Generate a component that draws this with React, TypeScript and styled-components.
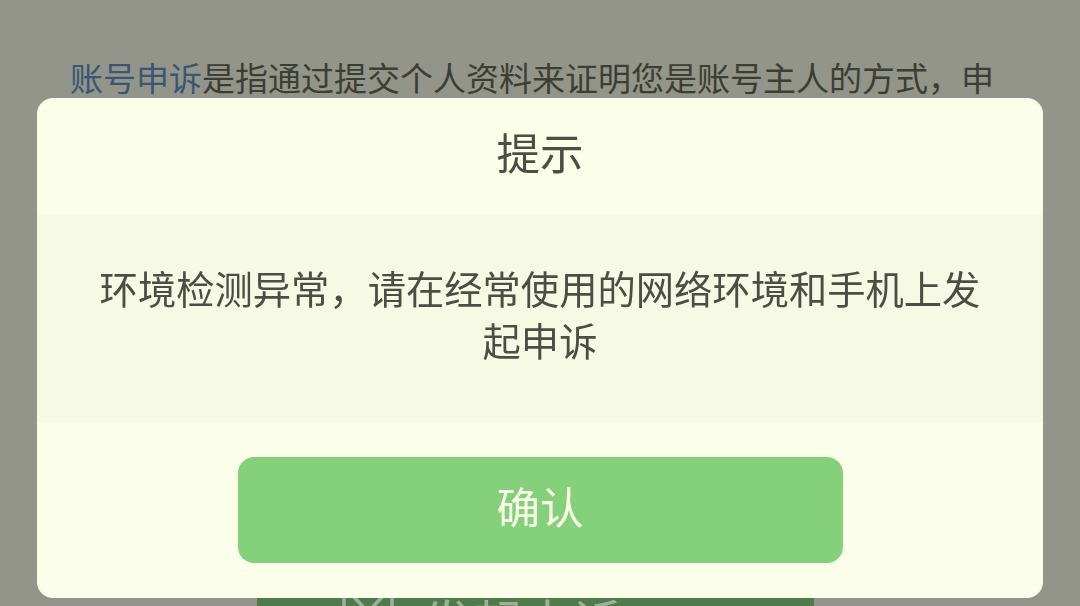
import { createGlobalStyle, styled } from "styled-components";

const Global = createGlobalStyle`
  html, body {
    margin: 0;
    padding: 0;
    height: 606px;
    overflow: hidden;
    background: #93958a;
    font-family: "Roboto", "Noto Sans CJK SC", sans-serif;
  }
`;

const Page = styled.div`
  width: 1080px;
  height: 606px;
  overflow: hidden;
  display: flex;
  flex-direction: column;
  align-items: center;
  background: #93958a;
`;

const Intro = styled.p`
  margin: 0;
  width: 940px;
  padding-top: 56px;
  height: 542px;
  flex: none;
  box-sizing: border-box;
  font-size: 33px;
  line-height: 48px;
  color: #3c3e34;
  a {
    color: #3b5675;
    text-decoration: none;
  }
`;

const SubmitBar = styled.div`
  flex: none;
  width: 557px;
  height: 100px;
  margin-right: 10px;
  display: flex;
  align-items: flex-start;
  gap: 27px;
  padding: 48px 0 0 83px;
  box-sizing: border-box;
  background: #4f7b4c;
  color: #9db09a;
  font-size: 50px;
  line-height: 71px;
  white-space: nowrap;
`;

const Overlay = styled.div`
  position: fixed;
  inset: 0;
  display: flex;
  justify-content: center;
  align-items: flex-start;
  padding-top: 98px;
`;

const Dialog = styled.div`
  width: 1006px;
  height: 500px;
  border-radius: 16px;
  overflow: hidden;
  background: #fbffe9;
  display: flex;
  flex-direction: column;
`;

const Title = styled.div`
  height: 116px;
  box-sizing: border-box;
  padding-bottom: 9px;
  display: flex;
  align-items: center;
  justify-content: center;
  font-size: 43.5px;
  color: #4c4e43;
`;

const Body = styled.div`
  height: 208px;
  box-sizing: border-box;
  padding: 51px 60px 0;
  background: #f6f9e4;
  font-size: 38.3px;
  line-height: 52px;
  text-align: center;
  color: #4c4e43;
`;

const Footer = styled.div`
  flex: 1;
  display: flex;
  justify-content: center;
  padding-top: 35px;
`;

const Confirm = styled.button`
  width: 605px;
  height: 106px;
  padding: 0 0 10px;
  border: none;
  border-radius: 16px;
  background: #85d07a;
  color: #fbffe9;
  font-family: inherit;
  font-size: 43.5px;
`;

const App = () => {
  return (
    <Page>
      <Global />
      <Intro>
        <a>账号申诉</a>是指通过提交个人资料来证明您是账号主人的方式，申
      </Intro>
      <SubmitBar>
        <svg width="56" height="60" viewBox="0 0 56 60" fill="none" stroke="#9db09a" strokeWidth="3.5">
          <path d="M4 2h48v30L28 54 4 32z" />
          <path d="M13 6l15 16 15-16" />
        </svg>
        发起申诉
      </SubmitBar>
      <Overlay>
        <Dialog>
          <Title>提示</Title>
          <Body>环境检测异常，请在经常使用的网络环境和手机上发起申诉</Body>
          <Footer>
            <Confirm>确认</Confirm>
          </Footer>
        </Dialog>
      </Overlay>
    </Page>
  );
};

export default App;
